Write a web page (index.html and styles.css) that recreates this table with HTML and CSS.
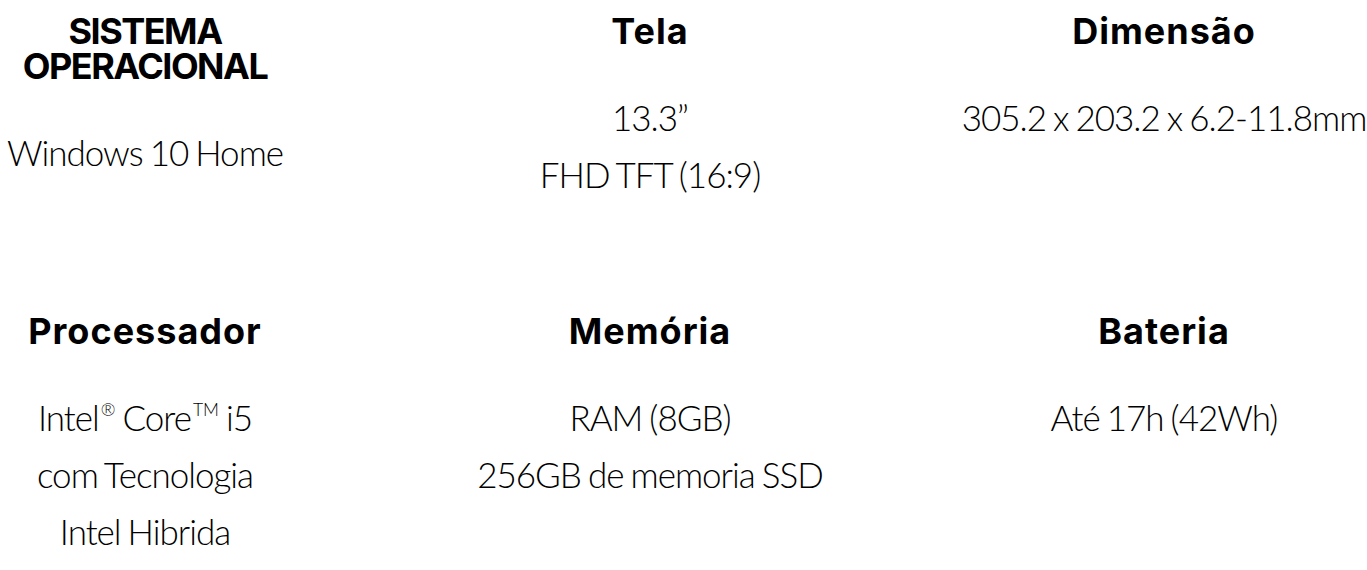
FILE: index.html
```html
<!DOCTYPE html>
<html lang="pt">
<head>
<meta charset="utf-8">
<title>Especificações</title>
<link rel="stylesheet" href="styles.css">
</head>
<body>
<main class="specs">
  <section class="spec">
    <h2 class="spec-title spec-title--caps">SISTEMA<br>OPERACIONAL</h2>
    <p class="spec-text">Windows 10 Home</p>
  </section>
  <section class="spec">
    <h2 class="spec-title">Tela</h2>
    <p class="spec-text">13.3”<br>FHD TFT (16:9)</p>
  </section>
  <section class="spec">
    <h2 class="spec-title">Dimensão</h2>
    <p class="spec-text">305.2 x 203.2 x 6.2-11.8mm</p>
  </section>
  <section class="spec">
    <h2 class="spec-title">Processador</h2>
    <p class="spec-text">Intel<sup class="mark">®</sup> Core<sup class="mark">TM</sup> i5<br>com Tecnologia<br>Intel Hibrida</p>
  </section>
  <section class="spec">
    <h2 class="spec-title">Memória</h2>
    <p class="spec-text">RAM (8GB)<br>256GB de memoria SSD</p>
  </section>
  <section class="spec">
    <h2 class="spec-title">Bateria</h2>
    <p class="spec-text">Até 17h (42Wh)</p>
  </section>
</main>
</body>
</html>
```
FILE: styles.css
```css
html, body {
  margin: 0;
  padding: 0;
  background: #ffffff;
}

body {
  width: 1367px;
  height: 570px;
  overflow: hidden;
  color: #000000;
}

.specs {
  display: grid;
  grid-template-columns: 290px 720px 308px;
  grid-template-rows: 189px auto;
  row-gap: 111px;
  padding-top: 14px;
}

.spec {
  display: flex;
  flex-direction: column;
  align-items: center;
  text-align: center;
  white-space: nowrap;
}

.spec-title {
  margin: 0;
  font-family: Inter, "Liberation Sans", sans-serif;
  font-weight: 700;
  font-size: 36px;
  line-height: 35px;
  letter-spacing: 1px;
  color: #000000;
}

.spec-title--caps {
  letter-spacing: -1.5px;
}

.spec-text {
  margin: 40px 0 0;
  font-family: Lato, "Liberation Sans", sans-serif;
  font-weight: 300;
  font-size: 35px;
  line-height: 57px;
  letter-spacing: -1px;
  word-spacing: -1.5px;
  color: #000000;
}

.mark {
  font-size: 0.5em;
  line-height: 0;
  vertical-align: 0.85em;
  margin-left: 2px;
  letter-spacing: 0;
}
```
